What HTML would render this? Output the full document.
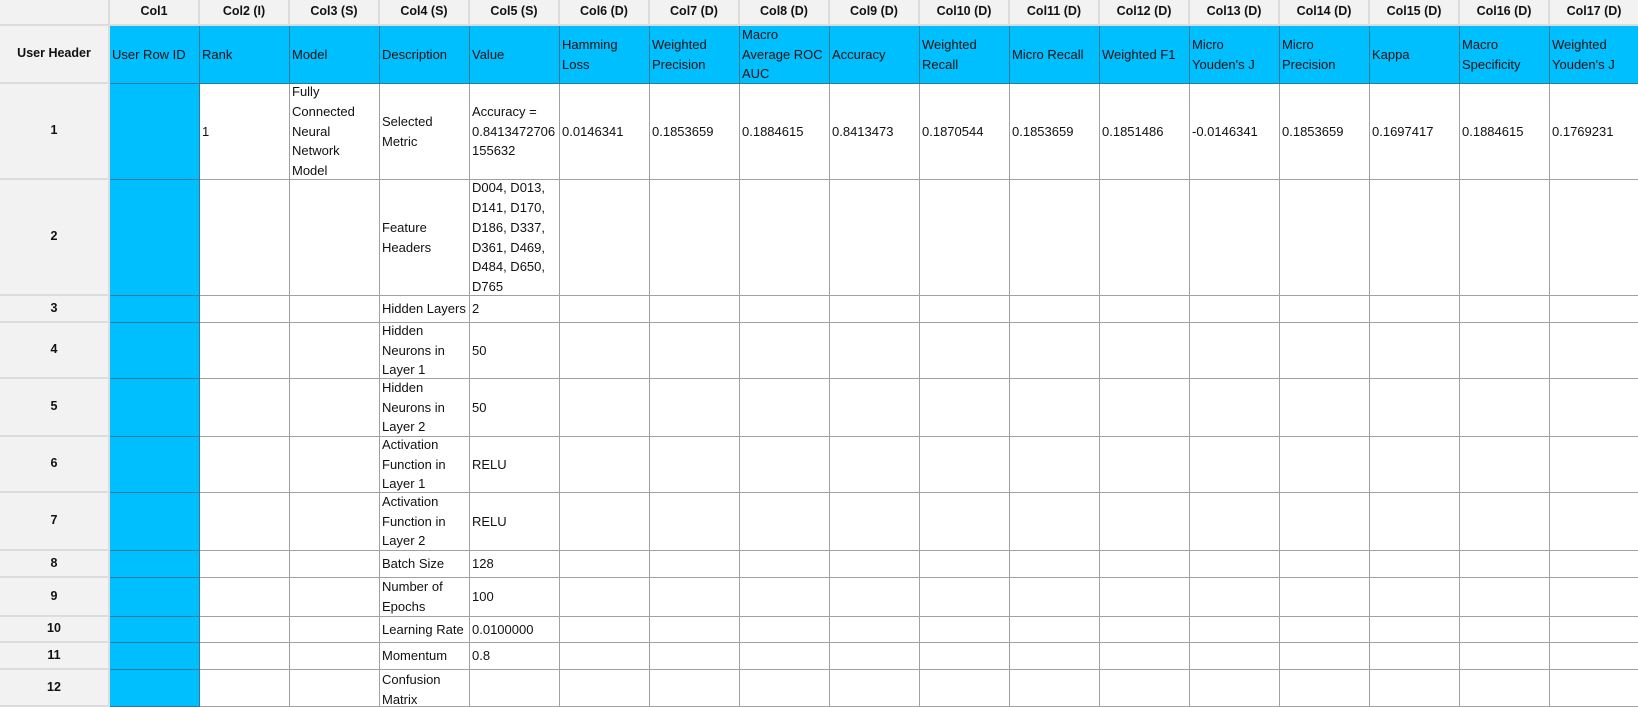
<!DOCTYPE html>
<html><head><meta charset="utf-8"><style>
html,body{margin:0;padding:0;background:#fff;width:1638px;height:707px;overflow:hidden}
.g{display:grid;grid-template-columns:110px repeat(17,90px);grid-template-rows:26px 58px 96px 116px 27px 56px 58px 56px 58px 27px 39px 26px 27px 37px;font-family:"Liberation Sans",sans-serif;font-size:13px;color:#111}
.g>div{box-sizing:border-box;border-right:1px solid #a0a0a0;border-bottom:1px solid #a0a0a0;display:flex;align-items:center;padding-left:2px;line-height:19.8px;overflow:hidden;background:#fff;white-space:nowrap}
.g>div.h{background:#f2f2f2;font-weight:bold;justify-content:center;padding:0;border-right:2px solid #dcdcdc;border-bottom:2px solid #dcdcdc;font-size:12.5px}
.g>div.c{background:#00bfff;border-right:1px solid #2a7d96;border-bottom:1px solid #2a7d96}
</style></head><body><div class="g">
<div class="h"></div><div class="h">Col1</div><div class="h">Col2 (I)</div><div class="h">Col3 (S)</div><div class="h">Col4 (S)</div><div class="h">Col5 (S)</div><div class="h">Col6 (D)</div><div class="h">Col7 (D)</div><div class="h">Col8 (D)</div><div class="h">Col9 (D)</div><div class="h">Col10 (D)</div><div class="h">Col11 (D)</div><div class="h">Col12 (D)</div><div class="h">Col13 (D)</div><div class="h">Col14 (D)</div><div class="h">Col15 (D)</div><div class="h">Col16 (D)</div><div class="h">Col17 (D)</div>

<div class="h">User Header</div><div class="c">User Row ID</div><div class="c">Rank</div><div class="c">Model</div><div class="c">Description</div><div class="c">Value</div><div class="c">Hamming<br>Loss</div><div class="c">Weighted<br>Precision</div><div class="c">Macro<br>Average ROC<br>AUC</div><div class="c">Accuracy</div><div class="c">Weighted<br>Recall</div><div class="c">Micro Recall</div><div class="c">Weighted F1</div><div class="c">Micro<br>Youden's J</div><div class="c">Micro<br>Precision</div><div class="c">Kappa</div><div class="c">Macro<br>Specificity</div><div class="c">Weighted<br>Youden's J</div>

<div class="h">1</div><div class="c"></div><div>1</div><div>Fully<br>Connected<br>Neural<br>Network<br>Model</div><div>Selected<br>Metric</div><div>Accuracy =<br>0.8413472706<br>155632</div><div>0.0146341</div><div>0.1853659</div><div>0.1884615</div><div>0.8413473</div><div>0.1870544</div><div>0.1853659</div><div>0.1851486</div><div>-0.0146341</div><div>0.1853659</div><div>0.1697417</div><div>0.1884615</div><div>0.1769231</div>

<div class="h">2</div><div class="c"></div><div></div><div></div><div>Feature<br>Headers</div><div>D004, D013,<br>D141, D170,<br>D186, D337,<br>D361, D469,<br>D484, D650,<br>D765</div><div></div><div></div><div></div><div></div><div></div><div></div><div></div><div></div><div></div><div></div><div></div><div></div>

<div class="h">3</div><div class="c"></div><div></div><div></div><div>Hidden Layers</div><div>2</div><div></div><div></div><div></div><div></div><div></div><div></div><div></div><div></div><div></div><div></div><div></div><div></div>

<div class="h">4</div><div class="c"></div><div></div><div></div><div>Hidden<br>Neurons in<br>Layer 1</div><div>50</div><div></div><div></div><div></div><div></div><div></div><div></div><div></div><div></div><div></div><div></div><div></div><div></div>

<div class="h">5</div><div class="c"></div><div></div><div></div><div>Hidden<br>Neurons in<br>Layer 2</div><div>50</div><div></div><div></div><div></div><div></div><div></div><div></div><div></div><div></div><div></div><div></div><div></div><div></div>

<div class="h">6</div><div class="c"></div><div></div><div></div><div>Activation<br>Function in<br>Layer 1</div><div>RELU</div><div></div><div></div><div></div><div></div><div></div><div></div><div></div><div></div><div></div><div></div><div></div><div></div>

<div class="h">7</div><div class="c"></div><div></div><div></div><div>Activation<br>Function in<br>Layer 2</div><div>RELU</div><div></div><div></div><div></div><div></div><div></div><div></div><div></div><div></div><div></div><div></div><div></div><div></div>

<div class="h">8</div><div class="c"></div><div></div><div></div><div>Batch Size</div><div>128</div><div></div><div></div><div></div><div></div><div></div><div></div><div></div><div></div><div></div><div></div><div></div><div></div>

<div class="h">9</div><div class="c"></div><div></div><div></div><div>Number of<br>Epochs</div><div>100</div><div></div><div></div><div></div><div></div><div></div><div></div><div></div><div></div><div></div><div></div><div></div><div></div>

<div class="h">10</div><div class="c"></div><div></div><div></div><div>Learning Rate</div><div>0.0100000</div><div></div><div></div><div></div><div></div><div></div><div></div><div></div><div></div><div></div><div></div><div></div><div></div>

<div class="h">11</div><div class="c"></div><div></div><div></div><div>Momentum</div><div>0.8</div><div></div><div></div><div></div><div></div><div></div><div></div><div></div><div></div><div></div><div></div><div></div><div></div>

<div class="h">12</div><div class="c"></div><div></div><div></div><div style="align-items:flex-start;padding-top:0">Confusion<br>Matrix</div><div></div><div></div><div></div><div></div><div></div><div></div><div></div><div></div><div></div><div></div><div></div><div></div><div></div>
</div></body></html>
